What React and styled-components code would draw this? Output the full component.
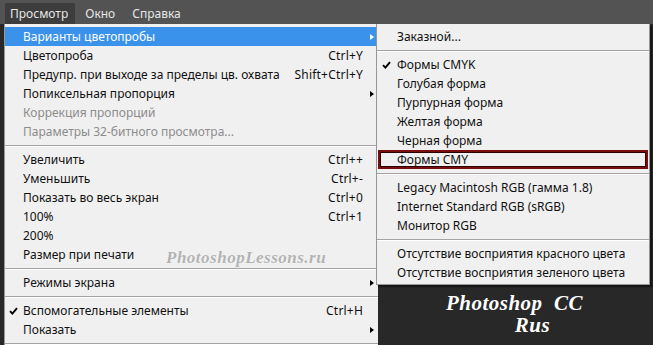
import React from 'react';
import styled, { createGlobalStyle } from 'styled-components';

const GlobalStyle = createGlobalStyle`
  html, body {
    margin: 0;
    padding: 0;
    background: #282828;
    overflow: hidden;
  }
`;

const COLORS = {
  bar: '#535353',
  tab: '#3d3d3d',
  barText: '#e6e6e6',
  desk: '#282828',
  menu: '#f0f0f0',
  text: '#101010',
  disabled: '#8c8c8c',
  highlight: '#3a92ea',
  sepDark: '#a3a3a3',
  border: '#979797',
};

const Screen = styled.div`
  width: 653px;
  height: 345px;
  overflow: hidden;
  background: ${COLORS.desk};
  font-family: 'Noto Sans', 'Open Sans', sans-serif;
  font-size: 12px;
  display: flex;
  flex-direction: column;
`;

const MenuBar = styled.div`
  height: 24px;
  flex-shrink: 0;
  background: ${COLORS.bar};
  display: flex;
  align-items: flex-end;
  padding-left: 5px;
  gap: 5px;
  box-sizing: border-box;
`;

const BarItem = styled.div`
  height: 21px;
  display: flex;
  align-items: center;
  padding: 0 7px 0 5px;
  color: ${COLORS.barText};
  background: ${(p) => (p.$open ? COLORS.tab : 'transparent')};
`;

const Workspace = styled.div`
  flex: 1;
  display: flex;
  align-items: flex-start;
  padding-left: 4px;
  position: relative;
`;

const MainMenu = styled.div`
  width: 373px;
  flex-shrink: 0;
  background: ${COLORS.menu};
  border-left: 1px solid ${COLORS.border};
  padding-top: 3px;
`;

const SideColumn = styled.div`
  width: 277px;
  margin-left: -2px;
  display: flex;
  flex-direction: column;
  position: relative;
  z-index: 1;
`;

const SubMenu = styled.div`
  width: 272px;
  background: ${COLORS.menu};
  border: 1px solid ${COLORS.border};
  border-top: none;
  padding: 3px 0 2px;
  box-shadow: 2px 2px 1px rgba(0, 0, 0, 0.45);
`;

const Row = styled.div`
  height: 19px;
  display: flex;
  align-items: center;
  box-sizing: border-box;
  color: ${(p) => (p.$active ? '#ffffff' : p.$disabled ? COLORS.disabled : COLORS.text)};
  background: ${(p) => (p.$active ? COLORS.highlight : 'transparent')};
  border: ${(p) => (p.$boxed ? '2px solid #7a0d0d' : 'none')};
  box-shadow: ${(p) => (p.$boxed ? 'inset 0 0 0 1px #2a0000' : 'none')};
  margin: ${(p) => (p.$boxed ? '0 1px' : '0')};
  white-space: nowrap;
`;

const CheckCell = styled.div`
  width: ${(p) => p.$w}px;
  flex-shrink: 0;
  display: flex;
  align-items: center;
  justify-content: center;
  padding-right: 2px;
  box-sizing: border-box;
`;

const Label = styled.div`
  flex: 1;
`;

const Shortcut = styled.div`
  text-align: right;
  letter-spacing: 0.2px;
`;

const ArrowCell = styled.div`
  width: 15px;
  flex-shrink: 0;
  display: flex;
  justify-content: center;
`;

const Arrow = styled.div`
  width: 0;
  height: 0;
  border-top: 3.5px solid transparent;
  border-bottom: 3.5px solid transparent;
  border-left: 4px solid ${(p) => (p.$light ? '#ffffff' : '#000000')};
  margin-left: 2px;
`;

const Separator = styled.div`
  height: 9px;
  padding-top: 4px;
  box-sizing: border-box;
  &::before {
    content: '';
    display: block;
    height: 1px;
    background: ${COLORS.sepDark};
    border-bottom: 1px solid #ffffff;
  }
`;

const Watermark = styled.div`
  position: absolute;
  left: 166px;
  top: 224px;
  font-family: 'Liberation Serif', serif;
  font-style: italic;
  font-weight: bold;
  font-size: 17px;
  letter-spacing: 0.5px;
  color: rgba(165, 165, 165, 0.85);
  text-shadow: 0 0 1px rgba(255, 255, 255, 0.9);
  pointer-events: none;
`;

const Brand = styled.div`
  display: flex;
  flex-direction: column;
  align-items: center;
  padding-top: 7px;
  color: #ffffff;
  font-family: 'Liberation Serif', serif;
  font-style: italic;
  font-weight: bold;
  font-size: 21px;
  line-height: 22px;
  letter-spacing: 0.5px;
`;

const BrandLine = styled.div`
  padding-left: ${(p) => p.$shift || 0}px;
  white-space: pre;
`;

const Check = () => (
  <svg width="9" height="8" viewBox="0 0 9 8">
    <path d="M1 4.2 L3.4 6.6 L8 1.2" fill="none" stroke="#000" strokeWidth="1.9" />
  </svg>
);

const mainItems = [
  { label: 'Варианты цветопробы', arrow: true, active: true },
  { label: 'Цветопроба', shortcut: 'Ctrl+Y' },
  { label: 'Предупр. при выходе за пределы цв. охвата', shortcut: 'Shift+Ctrl+Y' },
  { label: 'Попиксельная пропорция', arrow: true },
  { label: 'Коррекция пропорций', disabled: true },
  { label: 'Параметры 32-битного просмотра...', disabled: true },
  'sep',
  { label: 'Увеличить', shortcut: 'Ctrl++' },
  { label: 'Уменьшить', shortcut: 'Ctrl+-' },
  { label: 'Показать во весь экран', shortcut: 'Ctrl+0' },
  { label: '100%', shortcut: 'Ctrl+1' },
  { label: '200%' },
  { label: 'Размер при печати' },
  'sep',
  { label: 'Режимы экрана', arrow: true },
  'sep',
  { label: 'Вспомогательные элементы', shortcut: 'Ctrl+H', checked: true },
  { label: 'Показать', arrow: true },
  'sep',
];

const subItems = [
  { label: 'Заказной...' },
  'sep',
  { label: 'Формы CMYK', checked: true },
  { label: 'Голубая форма' },
  { label: 'Пурпурная форма' },
  { label: 'Желтая форма' },
  { label: 'Черная форма' },
  { label: 'Формы CMY', boxed: true },
  'sep',
  { label: 'Legacy Macintosh RGB (гамма 1.8)' },
  { label: 'Internet Standard RGB (sRGB)' },
  { label: 'Монитор RGB' },
  'sep',
  { label: 'Отсутствие восприятия красного цвета' },
  { label: 'Отсутствие восприятия зеленого цвета' },
];

const MenuList = ({ items, checkWidth, withArrows }) =>
  items.map((item, i) =>
    item === 'sep' ? (
      <Separator key={i} />
    ) : (
      <Row key={i} $active={item.active} $disabled={item.disabled} $boxed={item.boxed}>
        <CheckCell $w={item.boxed ? checkWidth - 3 : checkWidth}>{item.checked && <Check />}</CheckCell>
        <Label>{item.label}</Label>
        {item.shortcut && <Shortcut>{item.shortcut}</Shortcut>}
        {withArrows && <ArrowCell>{item.arrow && <Arrow $light={item.active} />}</ArrowCell>}
      </Row>
    )
  );

export default function App() {
  return (
    <Screen>
      <GlobalStyle />
      <MenuBar>
        <BarItem $open>Просмотр</BarItem>
        <BarItem>Окно</BarItem>
        <BarItem>Справка</BarItem>
      </MenuBar>
      <Workspace>
        <MainMenu>
          <MenuList items={mainItems} checkWidth={18} withArrows />
        </MainMenu>
        <SideColumn>
          <SubMenu>
            <MenuList items={subItems} checkWidth={20} />
          </SubMenu>
          <Brand>
            <BrandLine>{'Photoshop  CC'}</BrandLine>
            <BrandLine $shift={36}>Rus</BrandLine>
          </Brand>
        </SideColumn>
        <Watermark>PhotoshopLessons.ru</Watermark>
      </Workspace>
    </Screen>
  );
}
